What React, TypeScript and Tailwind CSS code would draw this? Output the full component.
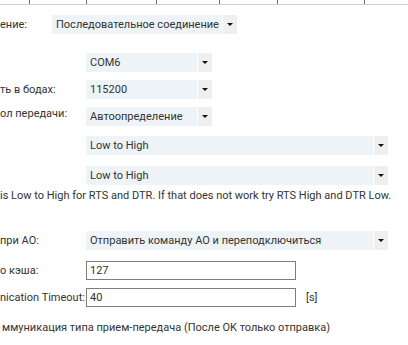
import React from 'react';

function Arrow() {
  return (
    <svg width="6" height="3" viewBox="0 0 6 3" className="block">
      <polygon points="0,0 6,0 3,3" fill="#111" />
    </svg>
  );
}

function Dropdown({ value, className }: { value: string; className: string }) {
  return (
    <div className={`flex h-[19px] ${className}`}>
      <div className="flex min-w-0 flex-1 items-center overflow-hidden whitespace-nowrap bg-[#edf3f6] pl-[4px] text-[#333]">
        {value}
      </div>
      <div className="ml-[1px] flex w-[14px] items-center justify-center bg-[#efefef]">
        <Arrow />
      </div>
    </div>
  );
}

function TextBox({ value }: { value: string }) {
  return (
    <div className="flex h-[19px] w-[210px] items-center border border-[#7d7d7d] bg-white pl-[3px] text-[#333]">
      {value}
    </div>
  );
}

export default function App() {
  const tabs = [30, 57, 70, 63, 58, 87];

  return (
    <div
      className="h-[345px] w-[408px] overflow-hidden bg-white text-[11px] leading-none text-[#333]"
      style={{ fontFamily: 'Roboto, "Liberation Sans", Arial, sans-serif' }}
    >
      {/* tab strip */}
      <div className="flex h-[5px] border-b border-[#cfcfcf]">
        {tabs.map((w, i) => (
          <div key={i} className="h-full border-r border-[#6e6e6e]" style={{ width: w }} />
        ))}
      </div>

      <div className="mt-[10px] flex items-center">
        <span className="w-[52px]">ение:</span>
        <Dropdown value="Последовательное соединение" className="w-[185px]" />
      </div>

      <div className="mt-[19px] flex items-center">
        <span className="w-[86px]"></span>
        <Dropdown value="COM6" className="w-[126px]" />
      </div>

      <div className="mt-[8px] flex items-center">
        <span className="w-[86px] whitespace-nowrap">ть в бодах:</span>
        <Dropdown value="115200" className="w-[126px]" />
      </div>

      <div className="mt-[8px] flex items-start">
        <span className="w-[86px] whitespace-nowrap pt-[1px]">ол передачи:</span>
        <Dropdown value="Автоопределение" className="w-[126px]" />
      </div>

      <div className="mt-[10px] flex items-center">
        <span className="w-[86px]"></span>
        <Dropdown value="Low to High" className="w-[302px]" />
      </div>

      <div className="mt-[11px] flex items-center">
        <span className="w-[86px]"></span>
        <Dropdown value="Low to High" className="w-[302px]" />
      </div>

      <div className="mt-[5px] whitespace-nowrap">
        is Low to High for RTS and DTR. If that does not work try RTS High and DTR Low.
      </div>

      <div className="mt-[30px] flex items-center">
        <span className="w-[86px] whitespace-nowrap">при АО:</span>
        <Dropdown value="Отправить команду АО и переподключиться" className="w-[302px]" />
      </div>

      <div className="mt-[11px] flex items-center">
        <span className="w-[86px] whitespace-nowrap">о кэша:</span>
        <TextBox value="127" />
      </div>

      <div className="mt-[8px] flex items-center">
        <span className="w-[86px] shrink-0 whitespace-nowrap">nication Timeout:</span>
        <TextBox value="40" />
        <span className="ml-[10px]">[s]</span>
      </div>

      <div className="mt-[15px] whitespace-nowrap pl-[2px]">
        ммуникация типа прием-передача (После OK только отправка)
      </div>
    </div>
  );
}
